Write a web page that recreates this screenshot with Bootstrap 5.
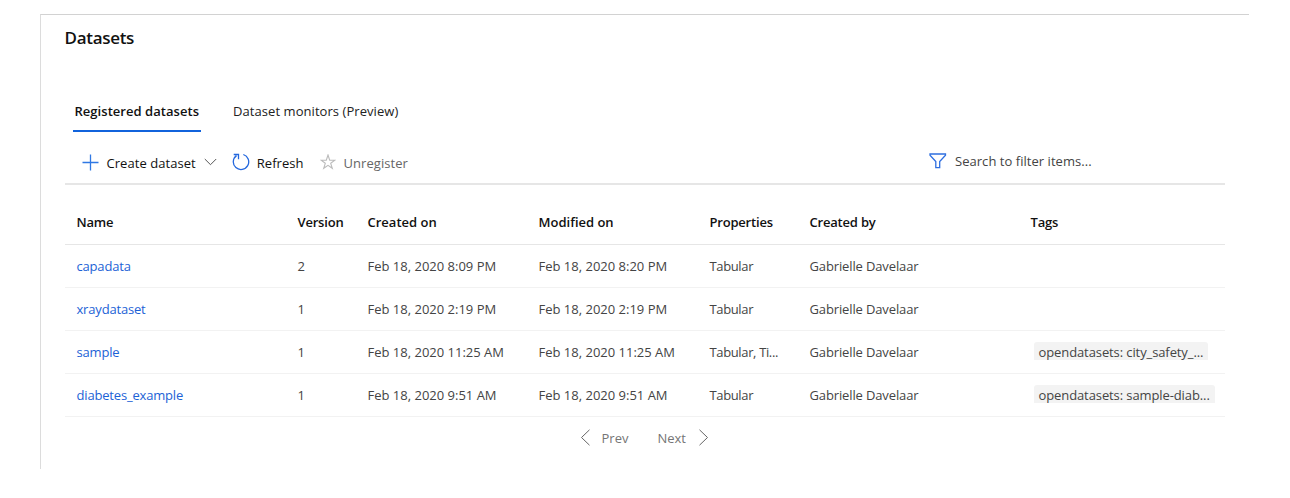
<!DOCTYPE html>
<html lang="en">
<head>
<meta charset="utf-8">
<meta name="viewport" content="width=device-width, initial-scale=1">
<title>Datasets</title>
<link rel="stylesheet" href="https://cdn.jsdelivr.net/npm/bootstrap@5.3.0/dist/css/bootstrap.min.css">
<style>
  body { font-family: "Segoe UI", "Open Sans", "Noto Sans", sans-serif; font-size: 13px; line-height: 20px; color: #444; background: #fff; overflow: hidden; }
  .panel { margin: 14px 41px 0 39.5px; height: 455px; border-top: 1px solid #d2d2d2; border-left: 1px solid #dcdcdc; padding: 0 24px; }
  .panel h1 { font-size: 17px; line-height: 24px; font-weight: 600; color: #111; margin: 11px 0 0; letter-spacing: -.3px; }
  .tabs { margin: 46px 0 0 8px; gap: 30px; height: 36px; }
  .tabs .nav-link { padding: 5px 2px 0; color: #222; border-bottom: 2px solid transparent; letter-spacing: .06px; }
  .tabs .nav-link.active { color: #111; font-weight: 600; border-color: #1163dc; letter-spacing: .04px; }
  .tools { height: 53px; padding-top: 9px; border-bottom: 2px solid #e6e6e6; }
  .tool { padding: 0; border: 0; font-size: 13px; line-height: 20px; color: #111; display: flex; align-items: center; letter-spacing: .05px; }
  .tool:disabled { color: #666; border: 0; opacity: 1; }
  .tool span { padding-top: 1px; }
  svg { flex: none; fill: none; }
  .filter { width: 296px; margin-top: -3px; letter-spacing: .04px; }
  .grid-table { table-layout: fixed; width: 1160px; margin: 16px 0 0; }
  .grid-table > :not(caption) > * > * { padding: 0 12px; height: 43px; vertical-align: middle; border-bottom: 1px solid #f2f2f2; white-space: nowrap; color: #444; background: none; box-shadow: none; letter-spacing: 0; }
  .grid-table > thead > tr > th { color: #111; font-weight: 600; border-color: #e6e6e6; letter-spacing: -.2px; }
  .grid-table > thead > tr > th:nth-child(3), .grid-table > thead > tr > th:nth-child(4) { letter-spacing: 0; }
  .grid-table > tbody > tr > td:first-child { letter-spacing: -.18px; }
  .grid-table > tbody > tr > td:nth-child(5) { letter-spacing: -.36px; }
  .grid-table > tbody > tr > td:nth-child(n+6) { letter-spacing: -.13px; }
  .grid-table > tbody > tr > td:nth-child(7) { letter-spacing: -.1px; }
  .grid-table a { color: #1c62d6; text-decoration: none; }
  .tagpill { display: block; width: fit-content; height: 18px; line-height: 20px; background: #f3f3f3; border-radius: 3px 3px 0 0; padding: 0 5px; margin: -1px 0 0 3px; }
  .pager { margin-left: 515px; margin-top: 11px; color: #757575; }
</style>
</head>
<body>
<main class="panel">
  <h1>Datasets</h1>
  <nav class="nav tabs">
    <a class="nav-link active" href="#">Registered datasets</a>
    <a class="nav-link" href="#">Dataset monitors (Preview)</a>
  </nav>
  <div class="tools d-flex align-items-center">
    <button class="btn tool">
      <svg width="17" height="17" style="margin:0 8px 0 17px" stroke="#2f78e4" stroke-width="1.3"><path d="M8.5.5v16M.5 8.5h16"/></svg>
      <span>Create dataset</span>
      <svg width="13" height="8" style="margin:0 0 1px 8px" stroke="#555"><path d="M.8 1l5.700 5.700L12.200 1"/></svg>
    </button>
    <button class="btn tool">
      <svg width="18" height="18" style="margin:0 7px 1px 15px" stroke="#2468de" stroke-width="1.3"><path d="M11.300 1.500A7.700 7.700 0 1 1 4.500 2.600M1.700 1.500h4.800v4.700"/></svg>
      <span>Refresh</span>
    </button>
    <button class="btn tool" disabled>
      <svg width="16" height="16" style="margin:0 8px 1px 16px" stroke="#bbb" stroke-width="1.100"><path d="M8 1l1.700 5.200h5.200l-4.200 3.100 1.600 5L8 11.300l-4.300 3 1.600-5L1.100 6.200h5.200z"/></svg>
      <span>Unregister</span>
    </button>
    <div class="d-flex align-items-center ms-auto filter">
      <svg width="18" height="16" style="margin:0 8px 0 0" stroke="#2f6fe0" stroke-width="1.300"><path d="M1 1h15.500v1.200L10.700 8.500v6.200H6.800V8.500L1 2.200z"/></svg>
      <span>Search to filter items...</span>
    </div>
  </div>
  <table class="table grid-table">
    <colgroup><col style="width:221px"><col style="width:70px"><col style="width:171px"><col style="width:171px"><col style="width:100px"><col style="width:221px"><col></colgroup>
    <thead><tr><th>Name</th><th>Version</th><th>Created on</th><th>Modified on</th><th>Properties</th><th>Created by</th><th>Tags</th></tr></thead>
    <tbody>
      <tr><td><a href="#">capadata</a></td><td>2</td><td>Feb 18, 2020 8:09 PM</td><td>Feb 18, 2020 8:20 PM</td><td>Tabular</td><td>Gabrielle Davelaar</td><td></td></tr>
      <tr><td><a href="#">xraydataset</a></td><td>1</td><td>Feb 18, 2020 2:19 PM</td><td>Feb 18, 2020 2:19 PM</td><td>Tabular</td><td>Gabrielle Davelaar</td><td></td></tr>
      <tr><td><a href="#">sample</a></td><td>1</td><td>Feb 18, 2020 11:25 AM</td><td>Feb 18, 2020 11:25 AM</td><td>Tabular, Ti...</td><td>Gabrielle Davelaar</td><td><span class="tagpill">opendatasets: city_safety_...</span></td></tr>
      <tr><td><a href="#">diabetes_example</a></td><td>1</td><td>Feb 18, 2020 9:51 AM</td><td>Feb 18, 2020 9:51 AM</td><td>Tabular</td><td>Gabrielle Davelaar</td><td><span class="tagpill">opendatasets: sample-diab...</span></td></tr>
    </tbody>
  </table>
  <div class="pager d-flex align-items-center">
    <svg width="11" height="17" stroke="#666"><path d="M9.500 .8L1.500 8.500l8 7.700"/></svg>
    <span style="margin-left:11px">Prev</span>
    <span style="margin-left:29px">Next</span>
    <svg width="11" height="17" style="margin-left:12px" stroke="#666"><path d="M1.500 .8l8 7.700-8 7.700"/></svg>
  </div>
</main>
<script src="https://cdn.jsdelivr.net/npm/bootstrap@5.3.0/dist/js/bootstrap.bundle.min.js"></script>
</body>
</html>
